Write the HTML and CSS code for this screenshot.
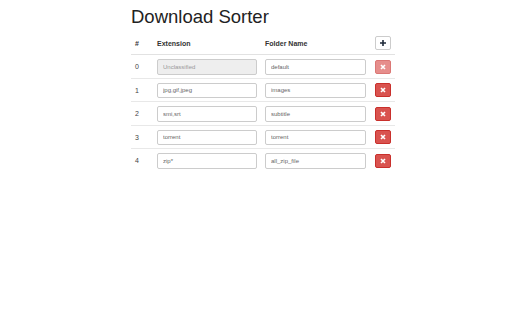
FILE: index.html
```html
<!DOCTYPE html>
<html lang="en">
<head>
<meta charset="UTF-8" />
<title>Download Sorter</title>
<link rel="stylesheet" href="styles.css">
</head>
<body>
<div class="container">
    <h1>Download Sorter</h1>
    <table class="rules">
        <colgroup>
            <col class="col-num">
            <col class="col-ext">
            <col class="col-folder">
            <col class="col-btn">
        </colgroup>
        <thead>
        <tr>
            <th>#</th>
            <th>Extension</th>
            <th>Folder Name</th>
            <th>
                <button class="btn btn-add" type="button">
                    <svg width="8" height="8" viewBox="0 0 8 8"><path d="M4 1v6M1 4h6" stroke="#1f2a3a" stroke-width="1.6"/></svg>
                </button>
            </th>
        </tr>
        </thead>
        <tbody>
        <tr>
            <td>0</td>
            <td><input class="field" type="text" value="Unclassified" disabled></td>
            <td><input class="field" type="text" value="default"></td>
            <td><button class="btn btn-del" type="button" disabled><svg width="6" height="6" viewBox="0 0 6 6"><path d="M1 1l4 4M5 1l-4 4" stroke="#fff" stroke-width="1.6"/></svg></button></td>
        </tr>
        <tr>
            <td>1</td>
            <td><input class="field" type="text" value="jpg,gif,jpeg"></td>
            <td><input class="field" type="text" value="images"></td>
            <td><button class="btn btn-del" type="button"><svg width="6" height="6" viewBox="0 0 6 6"><path d="M1 1l4 4M5 1l-4 4" stroke="#fff" stroke-width="1.6"/></svg></button></td>
        </tr>
        <tr>
            <td>2</td>
            <td><input class="field" type="text" value="smi,srt"></td>
            <td><input class="field" type="text" value="subtitle"></td>
            <td><button class="btn btn-del" type="button"><svg width="6" height="6" viewBox="0 0 6 6"><path d="M1 1l4 4M5 1l-4 4" stroke="#fff" stroke-width="1.6"/></svg></button></td>
        </tr>
        <tr>
            <td>3</td>
            <td><input class="field" type="text" value="torrent"></td>
            <td><input class="field" type="text" value="torrent"></td>
            <td><button class="btn btn-del" type="button"><svg width="6" height="6" viewBox="0 0 6 6"><path d="M1 1l4 4M5 1l-4 4" stroke="#fff" stroke-width="1.6"/></svg></button></td>
        </tr>
        <tr>
            <td>4</td>
            <td><input class="field" type="text" value="zip*"></td>
            <td><input class="field" type="text" value="all_zip_file"></td>
            <td><button class="btn btn-del" type="button"><svg width="6" height="6" viewBox="0 0 6 6"><path d="M1 1l4 4M5 1l-4 4" stroke="#fff" stroke-width="1.6"/></svg></button></td>
        </tr>
        </tbody>
    </table>
</div>
</body>
</html>
```

FILE: styles.css
```css
body {
    margin: 0;
    padding: 6px 0 0;
    background: #fff;
    color: #333;
    font-family: "Liberation Sans", Arial, sans-serif;
}
.container {
    width: 264px;
    margin-left: 131px;
}
h1 {
    margin: 0 0 4px;
    font-size: 18.5px;
    line-height: 21px;
    font-weight: normal;
    color: #222;
}
.rules {
    width: 100%;
    border-collapse: collapse;
    table-layout: fixed;
}
.col-num { width: 22px; }
.col-ext { width: 108px; }
.col-folder { width: 109px; }
.col-btn { width: 25px; }

.rules th,
.rules td {
    padding: 4px 4px 3px;
    text-align: left;
    font-size: 7px;
    vertical-align: middle;
}
.rules th {
    padding: 5px 4px 4px;
    font-weight: bold;
    color: #333;
    border-bottom: 1px solid #e2e2e2;
}
.rules tbody td {
    border-top: 1px solid #e8e8e8;
    color: #444;
}
.rules tbody tr:first-child td {
    border-top: none;
}
.rules td:last-child,
.rules th:last-child {
    padding-left: 5px;
}

.field {
    display: block;
    box-sizing: border-box;
    width: 100%;
    height: 15.5px;
    margin: 0;
    padding: 0 5px;
    border: 1px solid #ccc;
    border-radius: 2px;
    font-family: "Liberation Sans", Arial, sans-serif;
    font-size: 6px;
    line-height: 13px;
    color: #666;
    background: #fff;
}
.field:disabled {
    background: #eee;
    color: #999;
}

.btn {
    display: flex;
    align-items: center;
    justify-content: center;
    box-sizing: border-box;
    width: 16px;
    height: 14px;
    padding: 0;
    border-radius: 2px;
    cursor: pointer;
}
.btn-add {
    background: #fff;
    border: 1px solid #ccc;
}
.btn-del {
    background: #d9534f;
    border: 1px solid #c9302c;
}
.btn-del:disabled {
    opacity: 0.65;
    cursor: default;
}
```
